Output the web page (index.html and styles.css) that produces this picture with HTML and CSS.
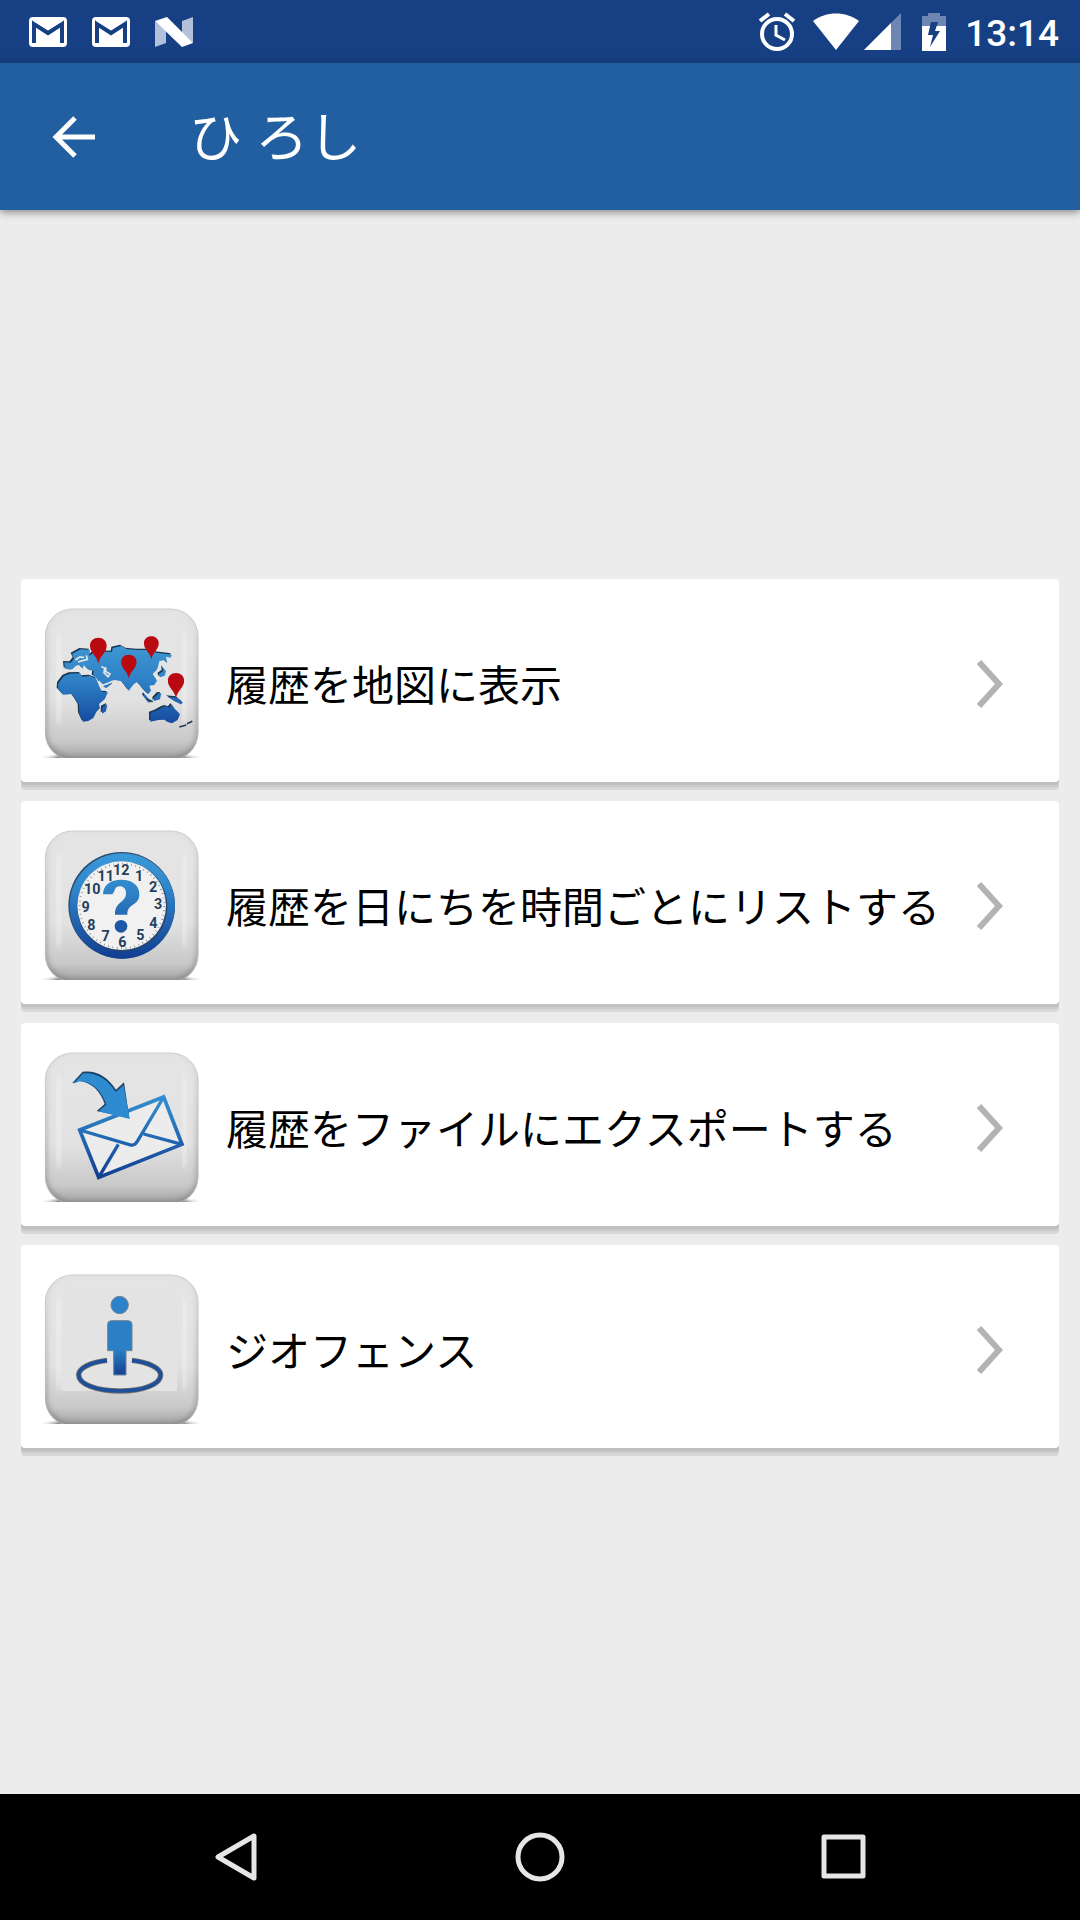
FILE: index.html
```html
<!DOCTYPE html>
<html lang="ja">
  <head>
    <meta charset="UTF-8" />
    <meta name="viewport" content="width=device-width, initial-scale=1.0" />
    <title>ひ ろし</title>
    <link rel="stylesheet" href="styles.css">
  </head>
  <body>
    <!-- shared gradients and the grey tile behind every menu icon -->
    <svg class="defs" aria-hidden="true">
      <defs>
        <linearGradient id="tile-fill" x1="0" y1="0" x2="0" y2="1">
          <stop offset="0" stop-color="#e4e4e4" />
          <stop offset="0.3" stop-color="#e4e4e4" />
          <stop offset="0.6" stop-color="#e2e2e2" />
          <stop offset="0.88" stop-color="#c8c8c8" />
          <stop offset="1" stop-color="#a0a0a0" />
        </linearGradient>
        <linearGradient id="tile-edge" x1="0" y1="0" x2="0" y2="1">
          <stop offset="0" stop-color="#dadada" />
          <stop offset="0.5" stop-color="#a8a8a8" />
          <stop offset="1" stop-color="#767676" />
        </linearGradient>
        <linearGradient id="blue" gradientUnits="userSpaceOnUse" x1="0" y1="190" x2="0" y2="500">
          <stop offset="0" stop-color="#3a9ad9" />
          <stop offset="0.35" stop-color="#2f85c9" />
          <stop offset="1" stop-color="#123f92" />
        </linearGradient>
        <linearGradient id="map-blue" gradientUnits="userSpaceOnUse" x1="0" y1="230" x2="0" y2="460">
          <stop offset="0" stop-color="#3d97d3" />
          <stop offset="0.45" stop-color="#2f80c6" />
          <stop offset="1" stop-color="#154a9e" />
        </linearGradient>
        <linearGradient id="legs-blue" gradientUnits="userSpaceOnUse" x1="0" y1="345" x2="0" y2="420">
          <stop offset="0" stop-color="#2b7fc5" />
          <stop offset="1" stop-color="#143f90" />
        </linearGradient>
        <radialGradient id="ground">
          <stop offset="0" stop-color="#666" />
          <stop offset="0.75" stop-color="#888" />
          <stop offset="1" stop-color="#fff" stop-opacity="0" />
        </radialGradient>
        <filter id="soft" x="-20%" y="-20%" width="140%" height="140%">
          <feGaussianBlur stdDeviation="9" />
        </filter>
        <clipPath id="tile-clip">
          <rect x="105" y="116" width="460" height="454" rx="82" />
        </clipPath>
        <symbol id="tile" viewBox="96 114 474 450">
          <ellipse cx="333" cy="564" rx="250" ry="22" fill="url(#ground)" />
          <rect x="105" y="116" width="460" height="454" rx="82" fill="url(#tile-fill)" />
          <g clip-path="url(#tile-clip)">
            <rect x="101" y="108" width="468" height="464" rx="86" fill="none" stroke="url(#tile-edge)" stroke-width="14" filter="url(#soft)" />
            <rect x="142" y="190" width="10" height="270" fill="#f4f4f4" filter="url(#soft)" />
            <rect x="518" y="190" width="10" height="270" fill="#f4f4f4" filter="url(#soft)" />
          </g>
          <rect x="106" y="117" width="458" height="452" rx="81" fill="none" stroke="#c6c6c6" stroke-width="2" />
        </symbol>
        <symbol id="chevron" viewBox="0 0 26 48">
          <path d="M2 2L22 24L2 46" fill="none" stroke="#b3b3b3" stroke-width="6" />
        </symbol>
        <symbol id="pin" viewBox="0 0 52 80">
          <path d="M26 79C22 55 1 46 1 25C1 10 12 1 26 1S51 10 51 25C51 46 30 55 26 79Z" fill="#b80a10" />
        </symbol>
        <symbol id="mail" viewBox="0 0 40 32">
          <rect x="1" y="1" width="38" height="30" rx="4" fill="#fff" />
          <path d="M6 27V8L20 17L34 8V27" fill="none" stroke="#164083" stroke-width="4" />
          <path d="M5 5H35L20 14Z" fill="#fff" />
        </symbol>
      </defs>
    </svg>

    <div class="screen">
      <div class="status-bar">
        <div class="notifications">
          <svg class="mail" viewBox="0 0 40 32"><use href="#mail" /></svg>
          <svg class="mail" viewBox="0 0 40 32"><use href="#mail" /></svg>
          <svg class="mail" viewBox="0 0 40 32">
            <path d="M1 5L12 15V27L1 31ZM28 5L39 1V27L28 18Z" fill="#b3c0da" />
            <path d="M1 5L13 1L39 27L28 31Z" fill="#fff" />
          </svg>
        </div>
        <div class="system-icons">
          <svg class="alarm" viewBox="0 0 38 40">
            <circle cx="19" cy="22" r="15" fill="none" stroke="#fff" stroke-width="4" />
            <path d="M2 9L11 2M27 2L36 9" stroke="#fff" stroke-width="4" />
            <path d="M18 13V23L27 28" fill="none" stroke="#fff" stroke-width="3" />
          </svg>
          <svg class="wifi" viewBox="0 0 46 37">
            <path d="M0 8C13-2 33-2 46 8L23 37Z" fill="#fff" />
          </svg>
          <svg class="signal" viewBox="0 0 37 37">
            <path d="M37 0V37H0Z" fill="#6d86b3" />
            <path d="M27 10V37H0Z" fill="#fff" />
          </svg>
          <svg class="battery" viewBox="0 0 24 38">
            <path d="M0 13V3H6V0H18V3H24V13Z" fill="#6d86b3" />
            <path d="M0 13H24V38H0Z" fill="#fff" />
            <path d="M9 9H16L13 18H18L8 34L11 22H6Z" fill="#164083" />
          </svg>
        </div>
        <span class="time">13:14</span>
      </div>

      <header class="app-bar">
        <button class="back-button" type="button" aria-label="戻る">
          <svg viewBox="0 0 44 42">
            <path d="M43 21H5M23 2L4 21L23 40" fill="none" stroke="#fff" stroke-width="5" />
          </svg>
        </button>
        <h1>ひ ろし</h1>
      </header>

      <main class="menu">
        <a class="card" href="#map">
          <svg class="icon" viewBox="96 114 474 450" aria-hidden="true">
            <use href="#tile" x="96" y="114" width="474" height="450" />
            <path d="M165 296L163 277L182 278L192 266L186 252L212 238L240 240L238 258L248 250L270 244L306 246L308 234L334 228L350 237L382 240L410 240L440 248L486 254L482 263L468 260L472 280L461 270L448 274L444 290L440 300L428 312L441 332L433 345L418 347L423 362L414 373L402 360L391 347L381 336L371 343L356 362L345 347L335 334L314 330L302 333L306 341L288 355L274 344L263 326L249 318L251 302L236 300L222 284L218 296L207 284L196 289L186 300ZM145 340L161 319L180 311L211 310L216 320L240 318L259 326L267 347L276 366L294 367L284 388L267 402L270 414L259 426L250 444L235 453L219 455L208 431L207 406L196 387L185 372L159 374L144 357ZM421 429L437 423L456 413L466 409L478 413L485 403L494 417L510 433L503 450L486 460L473 456L463 449L446 450L421 455ZM277 411L292 403L288 424L276 431ZM472 380L501 383L519 398L512 403L494 394ZM431 385L444 371L454 370L450 388L432 393ZM403 371L423 396L416 398L400 377ZM446 313L459 303L457 290L468 304L464 317L450 322Z" fill="#17364f" transform="translate(-4 -4)" />
            <path d="M165 296L163 277L182 278L192 266L186 252L212 238L240 240L238 258L248 250L270 244L306 246L308 234L334 228L350 237L382 240L410 240L440 248L486 254L482 263L468 260L472 280L461 270L448 274L444 290L440 300L428 312L441 332L433 345L418 347L423 362L414 373L402 360L391 347L381 336L371 343L356 362L345 347L335 334L314 330L302 333L306 341L288 355L274 344L263 326L249 318L251 302L236 300L222 284L218 296L207 284L196 289L186 300ZM145 340L161 319L180 311L211 310L216 320L240 318L259 326L267 347L276 366L294 367L284 388L267 402L270 414L259 426L250 444L235 453L219 455L208 431L207 406L196 387L185 372L159 374L144 357ZM421 429L437 423L456 413L466 409L478 413L485 403L494 417L510 433L503 450L486 460L473 456L463 449L446 450L421 455ZM277 411L292 403L288 424L276 431ZM472 380L501 383L519 398L512 403L494 394ZM431 385L444 371L454 370L450 388L432 393ZM403 371L423 396L416 398L400 377ZM446 313L459 303L457 290L468 304L464 317L450 322Z" fill="url(#map-blue)" />
            <path d="M196 270L209 261L222 262M204 276L232 268L229 256M274 290L284 294L282 308L294 320L300 312L286 304L288 292M224 304L238 308M180 302L192 298L203 302L210 296M266 334L278 346L304 336" fill="none" stroke="#e6e6e6" stroke-width="5" />
            <path d="M508 471L529 465M531 461L547 454M411 387L428 395" fill="none" stroke="#243a50" stroke-width="5" />
            <use href="#pin" x="239" y="202" width="52" height="80" />
            <use href="#pin" x="401" y="198" width="46" height="71" />
            <use href="#pin" x="332" y="253" width="49" height="74" />
            <use href="#pin" x="472" y="308" width="52" height="78" />
          </svg>
          <span class="label">履歴を地図に表示</span>
          <svg class="chevron" viewBox="0 0 26 48" aria-hidden="true"><use href="#chevron" /></svg>
        </a>

        <a class="card" href="#list">
          <svg class="icon" viewBox="96 120 474 450" aria-hidden="true">
            <use href="#tile" x="96" y="120" width="474" height="450" />
            <circle cx="335" cy="346" r="160" fill="#2b4c70" />
            <circle cx="337" cy="348" r="158" fill="url(#blue)" />
            <circle cx="337" cy="350" r="135" fill="#24466c" />
            <circle cx="335" cy="347" r="133" fill="#f1f1f1" />
            <circle cx="336" cy="348" r="127" fill="none" stroke="#777" stroke-width="6" stroke-dasharray="2 11.3" />
            <g class="clock-digits">
              <text x="334" y="254">12</text>
              <text x="387" y="273">1</text>
              <text x="429" y="305">2</text>
              <text x="444" y="357">3</text>
              <text x="430" y="413">4</text>
              <text x="391" y="451">5</text>
              <text x="337" y="470">6</text>
              <text x="287" y="454">7</text>
              <text x="244" y="419">8</text>
              <text x="227" y="366">9</text>
              <text x="247" y="311">10</text>
              <text x="287" y="273">11</text>
            </g>
            <path d="M279 313C280 284 302 269 334 269C367 269 388 286 388 312C388 350 352 337 352 374H315C314 333 348 340 348 309C348 296 340 289 329 289C313 289 317 302 307 313Z" fill="url(#blue)" />
            <circle cx="333" cy="409" r="19" fill="#1e57a5" />
          </svg>
          <span class="label">履歴を日にちを時間ごとにリストする</span>
          <svg class="chevron" viewBox="0 0 26 48" aria-hidden="true"><use href="#chevron" /></svg>
        </a>

        <a class="card" href="#export">
          <svg class="icon" viewBox="96 126 474 450" aria-hidden="true">
            <use href="#tile" x="96" y="126" width="474" height="450" />
            <path d="M209 360L461 261L516 403L266 502Z" fill="#ececec" stroke="url(#blue)" stroke-width="11" />
            <path d="M209 360L363 405Q375 407 382 394L461 261M266 502L325 403M401 372L516 403" fill="none" stroke="url(#blue)" stroke-width="10" />
            <path d="M186 220L218 185C262 180 294 202 318 239L342 217L358 324L260 303L284 282C272 244 244 216 207 213Z" fill="#1d4364" />
            <path d="M190 221L220 190C262 187 296 211 317 246L341 226L359 327L266 304L289 284C276 244 246 214 209 214Z" fill="#2f8bcf" />
          </svg>
          <span class="label">履歴をファイルにエクスポートする</span>
          <svg class="chevron" viewBox="0 0 26 48" aria-hidden="true"><use href="#chevron" /></svg>
        </a>

        <a class="card" href="#geofence">
          <svg class="icon" viewBox="96 117 474 450" aria-hidden="true">
            <use href="#tile" x="96" y="117" width="474" height="450" />
            <rect x="155" y="180" width="346" height="288" fill="#e3e3e3" />
            <path d="M291 376C240 382 206 399 206 420C206 448 261 468 330 468S452 448 452 420C452 399 417 382 366 376" fill="none" stroke="#77736f" stroke-width="16" />
            <path d="M291 376C240 382 206 399 206 420C206 448 261 468 330 468S452 448 452 420C452 399 417 382 366 376" fill="none" stroke="#1e4f99" stroke-width="11" />
            <g stroke="#6f8494" stroke-width="3">
              <circle cx="329" cy="210" r="26" fill="#2b82c9" />
              <path d="M293 347V268Q293 257 304 257H355Q366 257 366 268V347H348V420H311V347Z" fill="#2b7fc5" />
            </g>
            <path d="M313 345H346V418H313Z" fill="url(#legs-blue)" />
          </svg>
          <span class="label">ジオフェンス</span>
          <svg class="chevron" viewBox="0 0 26 48" aria-hidden="true"><use href="#chevron" /></svg>
        </a>
      </main>

      <nav class="nav-bar">
        <button type="button" aria-label="戻る">
          <svg viewBox="0 0 50 50"><path d="M43 4V46L7 25Z" /></svg>
        </button>
        <button type="button" aria-label="ホーム">
          <svg viewBox="0 0 50 50"><circle cx="25" cy="25" r="22" /></svg>
        </button>
        <button type="button" aria-label="最近のアプリ">
          <svg viewBox="0 0 50 50"><rect x="5" y="5" width="39" height="39" /></svg>
        </button>
      </nav>
    </div>
  </body>
</html>
```

FILE: styles.css
```css
* {
  box-sizing: border-box;
}
body {
  margin: 0;
  font-family: Roboto, "Noto Sans CJK JP", sans-serif;
  background-color: #ececec;
  color: #000;
}
svg {
  display: block;
  flex-shrink: 0;
}
button {
  padding: 0;
  border: none;
  background: none;
  cursor: pointer;
}
.defs {
  position: absolute;
  width: 0;
  height: 0;
}
.screen {
  min-height: 100vh;
  display: flex;
  flex-direction: column;
}

.status-bar {
  height: 63px;
  padding: 0 21px 0 28px;
  display: flex;
  align-items: center;
  background-color: #164083;
  color: #fff;
}
.notifications {
  display: flex;
  gap: 23px;
  margin-right: auto;
}
.mail {
  width: 40px;
  height: 32px;
}
.system-icons {
  display: flex;
  align-items: center;
}
.alarm {
  width: 38px;
  height: 40px;
  margin-right: 17px;
}
.wifi {
  width: 46px;
  height: 37px;
  margin-right: 5px;
}
.signal {
  width: 37px;
  height: 37px;
  margin-right: 21px;
}
.battery {
  width: 24px;
  height: 38px;
  margin-right: 19px;
}
.time {
  font-size: 37px;
  font-weight: 500;
  padding-top: 3px;
}

.app-bar {
  height: 147px;
  padding: 0 42px;
  display: flex;
  align-items: center;
  background-color: #215fa0;
  color: #fff;
  box-shadow: 0 2px 8px rgba(0, 0, 0, 0.45);
}
.back-button {
  width: 147px;
  height: 84px;
  padding-left: 10px;
}
.back-button svg {
  width: 44px;
  height: 42px;
}
h1 {
  margin: 0;
  padding-bottom: 5px;
  font-family: Roboto, "Noto Sans CJK JP", sans-serif;
  font-size: 53px;
  font-weight: 400;
}

.menu {
  flex: 1;
  padding: 23px 21px 0;
  display: flex;
  flex-direction: column;
  justify-content: center;
  gap: 19px;
}
.card {
  min-height: 203px;
  padding: 7px 56px 0 21px;
  display: flex;
  align-items: center;
  border-radius: 4px;
  background-color: #fff;
  box-shadow: 0 3px 0 #c0c0c0, 0 5px 0 #cacaca, 0 8px 0 #d8d8d8;
  color: #000;
  text-decoration: none;
}
.icon {
  width: 158px;
  height: 150px;
  margin-right: 26px;
  margin-bottom: 2px;
}
.label {
  flex: 1;
  padding-bottom: 4px;
  font-family: "Noto Sans CJK JP", sans-serif;
  font-size: 42px;
}
.chevron {
  width: 26px;
  height: 48px;
}
.clock-digits {
  font-family: Roboto, sans-serif;
  font-size: 43px;
  font-weight: bold;
  fill: #24405c;
  text-anchor: middle;
}

.nav-bar {
  height: 126px;
  display: flex;
  justify-content: center;
  align-items: center;
  background-color: #000;
}
.nav-bar button {
  width: 304px;
  height: 126px;
  display: flex;
  justify-content: center;
  align-items: center;
}
.nav-bar svg {
  width: 50px;
  height: 50px;
  fill: none;
  stroke: #e6e6e6;
  stroke-width: 5px;
  stroke-linejoin: round;
}
```
